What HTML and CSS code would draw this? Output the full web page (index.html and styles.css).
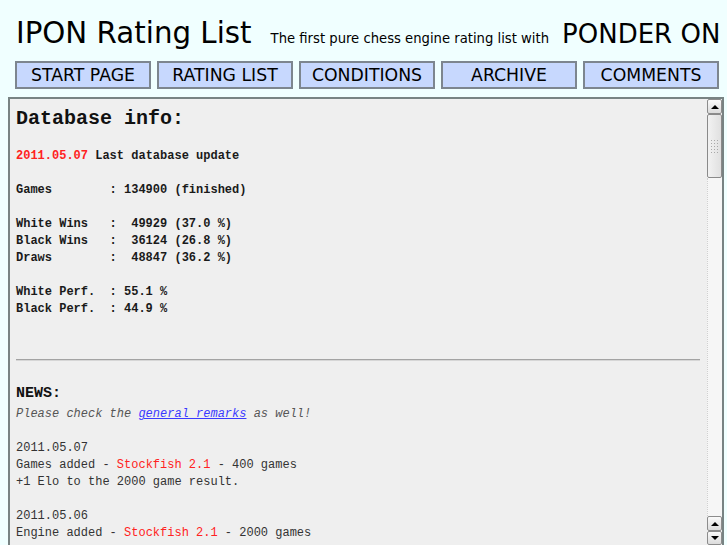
FILE: index.html
```
<!DOCTYPE html>
<html>
<head>
<meta charset="utf-8">
<title>IPON Rating List</title>
<link rel="stylesheet" href="styles.css">
</head>
<body>
<div class="header">
  <span class="title">IPON Rating List</span><span class="subtitle">The first pure chess engine rating list with</span><span class="ponder">PONDER ON</span>
</div>
<nav class="nav">
  <a class="navbtn">START PAGE</a>
  <a class="navbtn">RATING LIST</a>
  <a class="navbtn">CONDITIONS</a>
  <a class="navbtn">ARCHIVE</a>
  <a class="navbtn">COMMENTS</a>
</nav>
<div class="box">
  <div class="content">
    <h2 class="dbtitle">Database info:</h2>
<pre class="dbinfo"><span class="red">2011.05.07</span> Last database update

Games        : 134900 (finished)

White Wins   :  49929 (37.0 %)
Black Wins   :  36124 (26.8 %)
Draws        :  48847 (36.2 %)

White Perf.  : 55.1 %
Black Perf.  : 44.9 %</pre>
    <hr class="sep">
    <h3 class="newstitle">NEWS:</h3>
<pre class="news"><i>Please check the <a class="link">general remarks</a> as well!</i>

2011.05.07
Games added - <span class="red">Stockfish 2.1</span> - 400 games
+1 Elo to the 2000 game result.

2011.05.06
Engine added - <span class="red">Stockfish 2.1</span> - 2000 games</pre>
  </div>
  <div class="scrollbar">
    <div class="sbtn"><span class="arrow-up"></span></div>
    <div class="thumb"><span class="grip"></span></div>
    <div class="track"></div>
    <div class="sbtn"><span class="arrow-up"></span></div>
    <div class="sbtn sbtn-last"><span class="arrow-down"></span></div>
  </div>
</div>
</body>
</html>
```
FILE: styles.css
```
html, body {
  margin: 0;
  padding: 0;
  overflow: hidden;
}
body {
  background: #f0ffff;
  padding: 8px;
  font-family: "DejaVu Sans", Verdana, sans-serif;
  color: #000;
  height: 545px;
  box-sizing: border-box;
}
.header {
  padding: 8px 0 0 8px;
  height: 34px;
  line-height: 34px;
  white-space: nowrap;
}
.title {
  font-size: 29.3px;
}
.subtitle {
  font-size: 13.2px;
  line-height: 1;
  margin-left: 19px;
}
.ponder {
  font-size: 26px;
  line-height: 1;
  margin-left: 13px;
}
.nav {
  display: flex;
  gap: 6px;
  margin: 11px 0 0 7px;
}
.navbtn {
  width: 136px;
  height: 28px;
  box-sizing: border-box;
  border: 2px solid #7d868f;
  background: #c7d8fe;
  display: flex;
  align-items: center;
  justify-content: center;
  font-size: 17.3px;
  color: #000;
}
.box {
  margin-top: 8px;
  width: 716px;
  height: 450px;
  box-sizing: border-box;
  border: 2px solid #788383;
  background: #efefef;
  display: flex;
}
.content {
  flex: 1;
  overflow: hidden;
  padding: 8px 7px 0 6px;
  font-family: "Liberation Mono", "Courier New", monospace;
}
.dbtitle {
  margin: 0;
  font-size: 20px;
  line-height: 24px;
  font-weight: bold;
  color: #111;
}
.dbinfo {
  margin: 17px 0 0 0;
  font-family: "Liberation Mono", "Courier New", monospace;
  font-size: 12px;
  line-height: 17px;
  font-weight: bold;
  color: #1a1a1a;
}
.red {
  color: #ff2222;
}
.sep {
  margin: 41px 0 0 0;
  border: 0;
  border-top: 1px solid #a3a3a3;
  border-bottom: 1px solid #d6d6d6;
  height: 0;
}
.newstitle {
  margin: 24px 0 0 0;
  font-size: 15px;
  line-height: 18px;
  font-weight: bold;
  color: #111;
}
.news {
  margin: 3px 0 0 0;
  font-family: "Liberation Mono", "Courier New", monospace;
  font-size: 12px;
  line-height: 17px;
  color: #333;
}
.news i {
  color: #555;
}
.link {
  color: #3a3aff;
  text-decoration: underline;
}
.scrollbar {
  width: 15px;
  display: flex;
  flex-direction: column;
  background: #f7f7f7;
}
.sbtn {
  height: 15px;
  box-sizing: border-box;
  border: 1px solid #8c8c8c;
  border-radius: 2px;
  background: linear-gradient(#fafafa, #dcdcdc);
  display: flex;
  align-items: center;
  justify-content: center;
}
.sbtn-last {
  height: 14px;
}
.arrow-up {
  width: 0;
  height: 0;
  border-left: 4px solid transparent;
  border-right: 4px solid transparent;
  border-bottom: 4px solid #000;
}
.arrow-down {
  width: 0;
  height: 0;
  border-left: 4px solid transparent;
  border-right: 4px solid transparent;
  border-top: 4px solid #000;
}
.thumb {
  height: 64px;
  box-sizing: border-box;
  border: 1px solid #8a8a8a;
  border-radius: 2px;
  background: linear-gradient(90deg, #f2f2f2, #e0e0e0);
  display: flex;
  align-items: center;
  justify-content: center;
}
.grip {
  width: 9px;
  height: 15px;
  background: radial-gradient(circle, #a8a8a8 0.7px, transparent 1px) 0 0 / 3px 3px;
}
.track {
  flex: 1;
  border-left: 1px dotted #d0d0d0;
  background: #f6f6f6;
}
```
